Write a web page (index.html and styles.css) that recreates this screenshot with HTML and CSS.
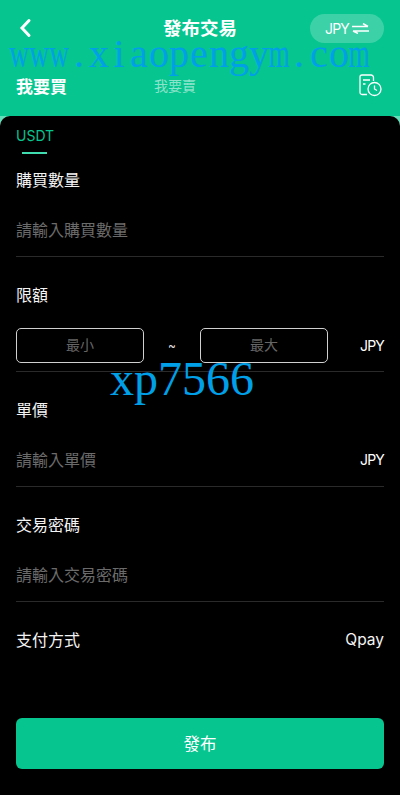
FILE: index.html
```html
<!DOCTYPE html>
<html lang="zh-Hant">
<head>
  <meta charset="UTF-8">
  <meta name="viewport" content="width=device-width, initial-scale=1.0">
  <title>發布交易</title>
  <link rel="stylesheet" href="styles.css">
</head>
<body>
  <div id="page">
    <div id="header">
      <div class="topbar">
        <div class="side">
          <svg class="back" width="14" height="20" viewBox="0 0 14 20"><path d="M11 2.500 4 10l7 7.500" fill="none" stroke="#fff" stroke-width="3" stroke-linecap="round"/></svg>
        </div>
        <span class="title">發布交易</span>
        <div class="side side-right">
          <div class="currency">
            <span>JPY</span>
            <svg width="17" height="11" viewBox="0 0 17 11"><path d="M0 3.500H16M11 .5 16 3.500M17 8H1M6 10.500 1 8" fill="none" stroke="#fff" stroke-width="1.500"/></svg>
          </div>
        </div>
      </div>
      <div class="tabs">
        <span class="tab-on">我要買</span>
        <span class="tab-off">我要賣</span>
        <svg class="history" width="23" height="23" viewBox="0 0 23 23" fill="none" stroke="#fff" stroke-width="1.300"><path d="M8 20.500H3a2 2 0 0 1-2-2V3a2 2 0 0 1 2-2h9a2.500 2.500 0 0 1 2.500 2.500V7"/><path d="M4 6h7M4 10h2.500"/><circle cx="15.500" cy="15" r="6.500"/><path d="M15.500 11.500V15l2.500 1.500"/></svg>
      </div>
    </div>

    <div id="form">
      <div class="coin">USDT</div>
      <div class="coin-line"></div>

      <div class="label first">購買數量</div>
      <div class="row"><span class="hint">請輸入購買數量</span></div>

      <div class="label">限額</div>
      <div class="row range">
        <div class="box">最小</div>
        <span class="tilde">~</span>
        <div class="box">最大</div>
        <span class="unit">JPY</span>
      </div>

      <div class="label">單價</div>
      <div class="row"><span class="hint">請輸入單價</span><span class="unit">JPY</span></div>

      <div class="label">交易密碼</div>
      <div class="row"><span class="hint">請輸入交易密碼</span></div>

      <div class="label pay"><span>支付方式</span><span class="pay-name">Qpay</span></div>

      <div class="submit">發布</div>
    </div>

    <div class="mark-url"><span class="wide">w</span><span class="wide">w</span><span class="wide">w</span><span>.</span><span>x</span><span>i</span><span>a</span><span>o</span><span>p</span><span>e</span><span>n</span><span>g</span><span>y</span><span class="wide">m</span><span>.</span><span>c</span><span>o</span><span class="wide">m</span></div>
    <div class="mark-code">xp7566</div>
  </div>
</body>
</html>
```
FILE: styles.css
```css
* {
  box-sizing: border-box;
}
body {
  margin: 0;
  background-color: #000;
  font-family: Inter, "Noto Sans CJK TC", sans-serif;
  color: #fff;
}
#page {
  position: relative;
  width: 400px;
  height: 795px;
  overflow: hidden;
  background-color: #62dfba;
}
#header {
  height: 116px;
  padding: 14px 16px 0 16px;
  background-color: #06c58f;
}
.topbar {
  display: grid;
  grid-template-columns: 1fr auto 1fr;
  align-items: center;
  height: 29px;
}
.side {
  display: flex;
}
.side-right {
  justify-content: flex-end;
}
.back {
  margin-left: 2px;
  margin-bottom: 1px;
}
.title {
  padding-bottom: 3px;
  font-size: 18.500px;
  font-weight: 700;
}
.currency {
  display: flex;
  align-items: center;
  justify-content: center;
  gap: 3px;
  width: 74px;
  height: 29px;
  border-radius: 15px;
  background-color: rgba(255, 255, 255, 0.22);
  font-size: 14px;
  letter-spacing: -0.800px;
}
.tabs {
  display: flex;
  align-items: center;
  height: 24px;
  margin-top: 30px;
}
.tab-on {
  font-size: 17px;
  font-weight: 700;
  width: 138px;
}
.tab-off {
  font-size: 14px;
  color: rgba(255, 255, 255, 0.55);
}
.history {
  margin-left: auto;
  margin-right: 2px;
}
#form {
  height: 679px;
  padding: 0 16px;
  background-color: #000;
  border-radius: 10px 10px 0 0;
}
.coin {
  padding-top: 11px;
  height: 33px;
  font-size: 14px;
  line-height: 17px;
  color: #06c58f;
}
.coin-line {
  width: 25px;
  height: 2px;
  margin: 3px 0 0 6px;
  background-color: #3fdcb0;
}
.label {
  height: 20px;
  font-size: 16px;
  line-height: 20px;
  color: #f4f4f4;
}
.first {
  margin-top: 16px;
}
.row {
  display: flex;
  align-items: center;
  justify-content: space-between;
  height: 67px;
  margin-bottom: 28px;
  padding-top: 12px;
  border-bottom: 1px solid #2a2a2a;
}
.hint {
  font-size: 16px;
  color: #6b6b6b;
}
.unit {
  font-size: 14px;
  letter-spacing: -0.800px;
}
.range {
  align-items: flex-start;
  justify-content: flex-start;
  padding-top: 23px;
}
.range .unit {
  margin-left: auto;
  line-height: 35px;
}
.box {
  display: flex;
  align-items: center;
  justify-content: center;
  width: 128px;
  height: 35px;
  padding-bottom: 3px;
  border: 1px solid #d0d0d0;
  border-radius: 5px;
  font-size: 14px;
  color: #666;
}
.tilde {
  width: 56px;
  text-align: center;
  font-size: 12px;
  line-height: 35px;
  color: #ddd;
}
.pay {
  display: flex;
  justify-content: space-between;
}
.pay-name {
  font-size: 15.500px;
}
.submit {
  display: flex;
  align-items: center;
  justify-content: center;
  height: 51px;
  margin-top: 68px;
  padding-bottom: 2px;
  border-radius: 6px;
  background-color: #06c58f;
  font-size: 16.500px;
}
/* watermarks lie over the page */
.mark-url {
  position: absolute;
  left: 9px;
  top: 33px;
  display: flex;
  font-family: "Liberation Serif", serif;
  font-size: 40px;
  line-height: 42px;
  white-space: nowrap;
  color: #00a0e9;
}
.mark-url span {
  display: block;
  width: 20px;
  flex: none;
  text-align: center;
}
.mark-url .wide {
  display: flex;
  justify-content: center;
  transform: scaleX(0.68);
}
.mark-code {
  position: absolute;
  left: 110px;
  top: 351px;
  font-family: "Liberation Serif", serif;
  font-size: 48px;
  line-height: 56px;
  white-space: nowrap;
  color: #00a0e9;
}
```
